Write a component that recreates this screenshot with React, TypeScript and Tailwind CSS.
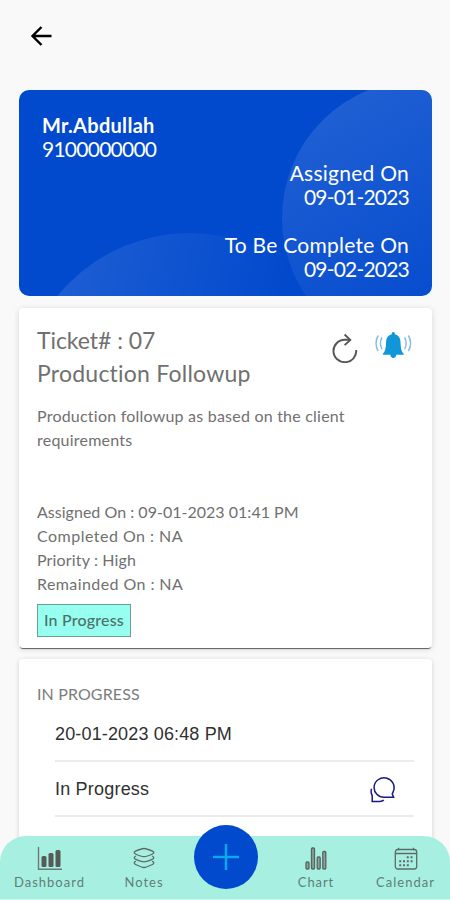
import { ReactNode } from "react";

interface INavItem {
  label: string;
  width: string;
  tracking: string;
  children: ReactNode;
}

const details = [
  { text: "Assigned On : 09-01-2023 01:41 PM", tracking: "tracking-[0.02px]" },
  { text: "Completed On : NA", tracking: "tracking-[0.48px]" },
  { text: "Priority : High", tracking: "tracking-[0.15px]" },
  { text: "Remainded On : NA", tracking: "tracking-[0.42px]" },
];

const BackIcon = () => (
  <svg width="22" height="20" viewBox="0 0 22 20" fill="none" stroke="#000" strokeWidth="2.4">
    <path d="M21.5 10H2.500M11.500 1L2.500 10l9 9" />
  </svg>
);

const RefreshIcon = () => (
  <svg width="26" height="30" viewBox="0 0 26 30" fill="none" stroke="#555" strokeWidth="1.9">
    <path d="M24.200 17A11.400 11.200 0 1 1 12.800 6.800H18" />
    <path d="M12.600 1.500l5.700 5.400-5.700 5.200" />
  </svg>
);

const BellIcon = () => (
  <svg width="38" height="28" viewBox="0 0 38 28" fill="none" stroke="#7dbbe6" strokeWidth="1.4">
    <path
      d="M18.300 0c1 0 1.600.9 1.600 2.300 3.600.9 5.400 3.600 5.600 7.400.2 5.500.5 9.300 3.200 12v1.100h-7.400c-.2 1.900-1.300 3.200-3 3.200s-2.800-1.300-3-3.200H7.900v-1.100c2.700-2.700 3-6.500 3.200-12 .2-3.800 2-6.500 5.600-7.400C16.700.9 17.300 0 18.300 0z"
      fill="#0f97d8"
      stroke="none"
    />
    <path d="M3.200 3.500C.3 8 .3 14.500 3.200 19M7 5.300c-1.900 3.600-1.900 8.300 0 11.900M33.400 3.500c2.900 4.500 2.900 11 0 15.500M29.600 5.300c1.900 3.600 1.900 8.300 0 11.900" />
  </svg>
);

const ChatIcon = () => (
  <svg width="26" height="26" viewBox="0 0 26 26" fill="none" stroke="#1a1a86" strokeWidth="1.500">
    <path d="M23.600 20.200h-9.200A10 9.700 0 1 1 23.600 13.500c-.3 1.400-.8 2.400-1.400 3.400z" />
    <path d="M1.600 11.800C.8 14 1 16.500 2.200 18.500v5.900h7.600c1.500 0 3-.4 4-1.300" />
  </svg>
);

const DashboardIcon = () => (
  <svg width="26" height="24" viewBox="0 0 26 24" fill="#555b59">
    <path d="M1.500 0v22.300H25" fill="none" stroke="#6b7b77" strokeWidth="1.400" />
    <rect x="4.500" y="9" width="5" height="11" rx="1.500" />
    <rect x="11.500" y="6" width="5" height="14" rx="1.500" />
    <rect x="18.500" y="3" width="5" height="17" rx="1.500" />
  </svg>
);

const NotesIcon = () => (
  <svg width="24" height="24" viewBox="0 0 24 24" fill="none" stroke="#5d6b67" strokeWidth="1.300">
    <path d="M12 1.500c2 0 4.500.9 8.500 2.700 1.800.9 1.800 1.900 0 2.800C16.500 8.900 14 9.700 12 9.700S7.500 8.900 3.500 7c-1.800-.9-1.800-1.900 0-2.800C7.500 2.400 10 1.500 12 1.500z" />
    <path d="M4 9c-2.300 1-2.300 2.300-.5 3.200 4 1.900 6.500 2.700 8.500 2.700s4.500-.8 8.500-2.700c1.800-.9 1.800-2.200-.5-3.200" />
    <path d="M4 14.200c-2.300 1-2.300 2.300-.5 3.200 4 1.900 6.500 3.100 8.500 3.100s4.500-1.200 8.500-3.100c1.800-.9 1.800-2.200-.5-3.200" />
  </svg>
);

const ChartIcon = () => (
  <svg width="24" height="24" viewBox="0 0 24 24" fill="#8aa39d" stroke="#566460" strokeWidth="1.300">
    <rect x="2" y="15" width="3" height="7" rx="1" />
    <rect x="7.500" y="1" width="3" height="21" rx="1" />
    <rect x="13.200" y="10" width="3" height="12" rx="1" />
    <rect x="18.800" y="4.500" width="3" height="17.500" rx="1" />
  </svg>
);

const CalendarIcon = () => (
  <svg width="24" height="24" viewBox="0 0 24 24" fill="none" stroke="#5d6b67" strokeWidth="1.300">
    <rect x="1.300" y="2.500" width="21.400" height="19.500" rx="2.500" />
    <path d="M1.300 6.500h21.400M4.500 .8v2.500M19.500 .8v2.500" />
    <path d="M12.700 10.300h7.500M5.200 14.300h15M5.200 18.300h11" strokeWidth="2" strokeDasharray="2 1.800" />
  </svg>
);

const NavItem: React.FC<INavItem> = ({ label, width, tracking, children }) => (
  <button className={`flex flex-col items-center pt-[11px] ${width}`}>
    {children}
    <span className={`text-[13px] leading-[22px] text-[#5f7e77] ${tracking}`}>{label}</span>
  </button>
);

const App = () => {
  return (
    <div className="relative flex h-[900px] w-[450px] flex-col overflow-hidden bg-[#f9f9f9] font-['Lato',sans-serif]">
      <header className="flex h-[90px] shrink-0 items-start pt-[26px] pl-[30px]">
        <button aria-label="Back">
          <BackIcon />
        </button>
      </header>

      <main className="flex flex-col pr-[18px] pl-[19px]">
        {/* Customer */}
        <section className="relative h-[206px] overflow-hidden rounded-[10px] bg-[#0149cd] text-white">
          <svg className="absolute inset-0" width="413" height="206" viewBox="0 0 413 206">
            <defs>
              <linearGradient id="fadeRight" x1="0.2" y1="0" x2="0.7" y2="0.900">
                <stop offset="0" stopColor="#fff" stopOpacity="0.13" />
                <stop offset="1" stopColor="#fff" stopOpacity="0" />
              </linearGradient>
              <linearGradient id="fadeLeft" x1="0.1" y1="0" x2="0.8" y2="0.150">
                <stop offset="0" stopColor="#fff" stopOpacity="0.12" />
                <stop offset="1" stopColor="#fff" stopOpacity="0" />
              </linearGradient>
            </defs>
            <circle cx="401" cy="128" r="138" fill="url(#fadeRight)" />
            <circle cx="171" cy="314" r="171" fill="url(#fadeLeft)" />
          </svg>
          <div className="relative flex flex-col px-[23px] pt-[23px] text-[21px] leading-6">
            <span className="text-[20px] font-bold tracking-[0.3px]">Mr.Abdullah</span>
            <span className="tracking-[-0.75px]">9100000000</span>
            <span className="text-right tracking-[0.25px]">Assigned On</span>
            <span className="text-right tracking-[-0.8px]">09-01-2023</span>
            <span className="mt-6 text-right tracking-[0.25px]">To Be Complete On</span>
            <span className="text-right tracking-[-0.8px]">09-02-2023</span>
          </div>
        </section>

        {/* Ticket */}
        <section className="mt-3 h-[340px] rounded-[4px] bg-white px-[18px] pt-[16px] text-[#707070] shadow-[0_2px_1px_-1px_rgba(0,0,0,0.6),0_1px_6px_rgba(0,0,0,0.14)]">
          <div className="flex justify-between">
            <h1 className="text-[23px] leading-[33px]">
              <span className="block tracking-[-0.05px]">Ticket# : 07</span>
              <span className="block tracking-[0.23px]">Production Followup</span>
            </h1>
            <div className="flex items-start gap-[17px] pr-px">
              <button aria-label="Refresh" className="pt-[9px]">
                <RefreshIcon />
              </button>
              <button aria-label="Remind" className="pt-[8px]">
                <BellIcon />
              </button>
            </div>
          </div>
          <p className="mt-[14px] w-[330px] text-base leading-6 tracking-[0.22px]">
            Production followup as based on the client requirements
          </p>
          <ul className="mt-12 text-base leading-6">
            {details.map(({ text, tracking }) => (
              <li key={text} className={tracking}>
                {text}
              </li>
            ))}
          </ul>
          <span className="mt-[8px] flex h-[33px] w-[94px] items-center justify-center border border-[#6f9c94] bg-[#97fff0] pb-px text-base font-medium tracking-[0.2px] text-[#4f6f6a]">
            In Progress
          </span>
        </section>

        {/* Status log */}
        <section className="mt-[11px] h-[260px] rounded-[4px] bg-white pt-[23px] pr-[18px] pl-[18px] shadow-[0_1px_5px_rgba(0,0,0,0.16)]">
          <h2 className="text-base leading-6 tracking-[0.12px] text-[#7c7c7c]">IN PROGRESS</h2>
          <div className="ml-[18px] font-['Liberation_Sans',sans-serif] text-[18px] text-[#303030]">
            <div className="flex h-[56px] items-center border-b-2 border-[#ececec] pt-[2px] tracking-[0.15px]">
              20-01-2023 06:48 PM
            </div>
            <div className="flex h-[55px] items-center justify-between border-b-2 border-[#ececec] pt-[2px] pr-[18px]">
              <span className="tracking-[0.2px]">In Progress</span>
              <ChatIcon />
            </div>
          </div>
        </section>
      </main>

      {/* Bottom navigation */}
      <nav className="absolute bottom-0 left-0 flex h-[64px] w-full rounded-t-[26px] border-b border-[#d5f6ef] bg-[#a7f0e1]">
        <NavItem label="Dashboard" width="w-[99px]" tracking="tracking-[1px]">
          <DashboardIcon />
        </NavItem>
        <NavItem label="Notes" width="w-[90px]" tracking="tracking-[1px]">
          <NotesIcon />
        </NavItem>
        <button
          aria-label="Add"
          className="relative -top-[11px] ml-[5px] flex size-16 items-center justify-center rounded-full bg-[#0149cd]"
        >
          <svg width="26" height="26" viewBox="0 0 26 26" stroke="#0aa9ee" strokeWidth="2.500">
            <path d="M13 0v26M0 13h26" />
          </svg>
        </button>
        <NavItem label="Chart" width="ml-[13px] w-[90px]" tracking="tracking-[0.9px]">
          <ChartIcon />
        </NavItem>
        <NavItem label="Calendar" width="w-[89px]" tracking="tracking-[1px]">
          <CalendarIcon />
        </NavItem>
      </nav>
    </div>
  );
};

export default App;
